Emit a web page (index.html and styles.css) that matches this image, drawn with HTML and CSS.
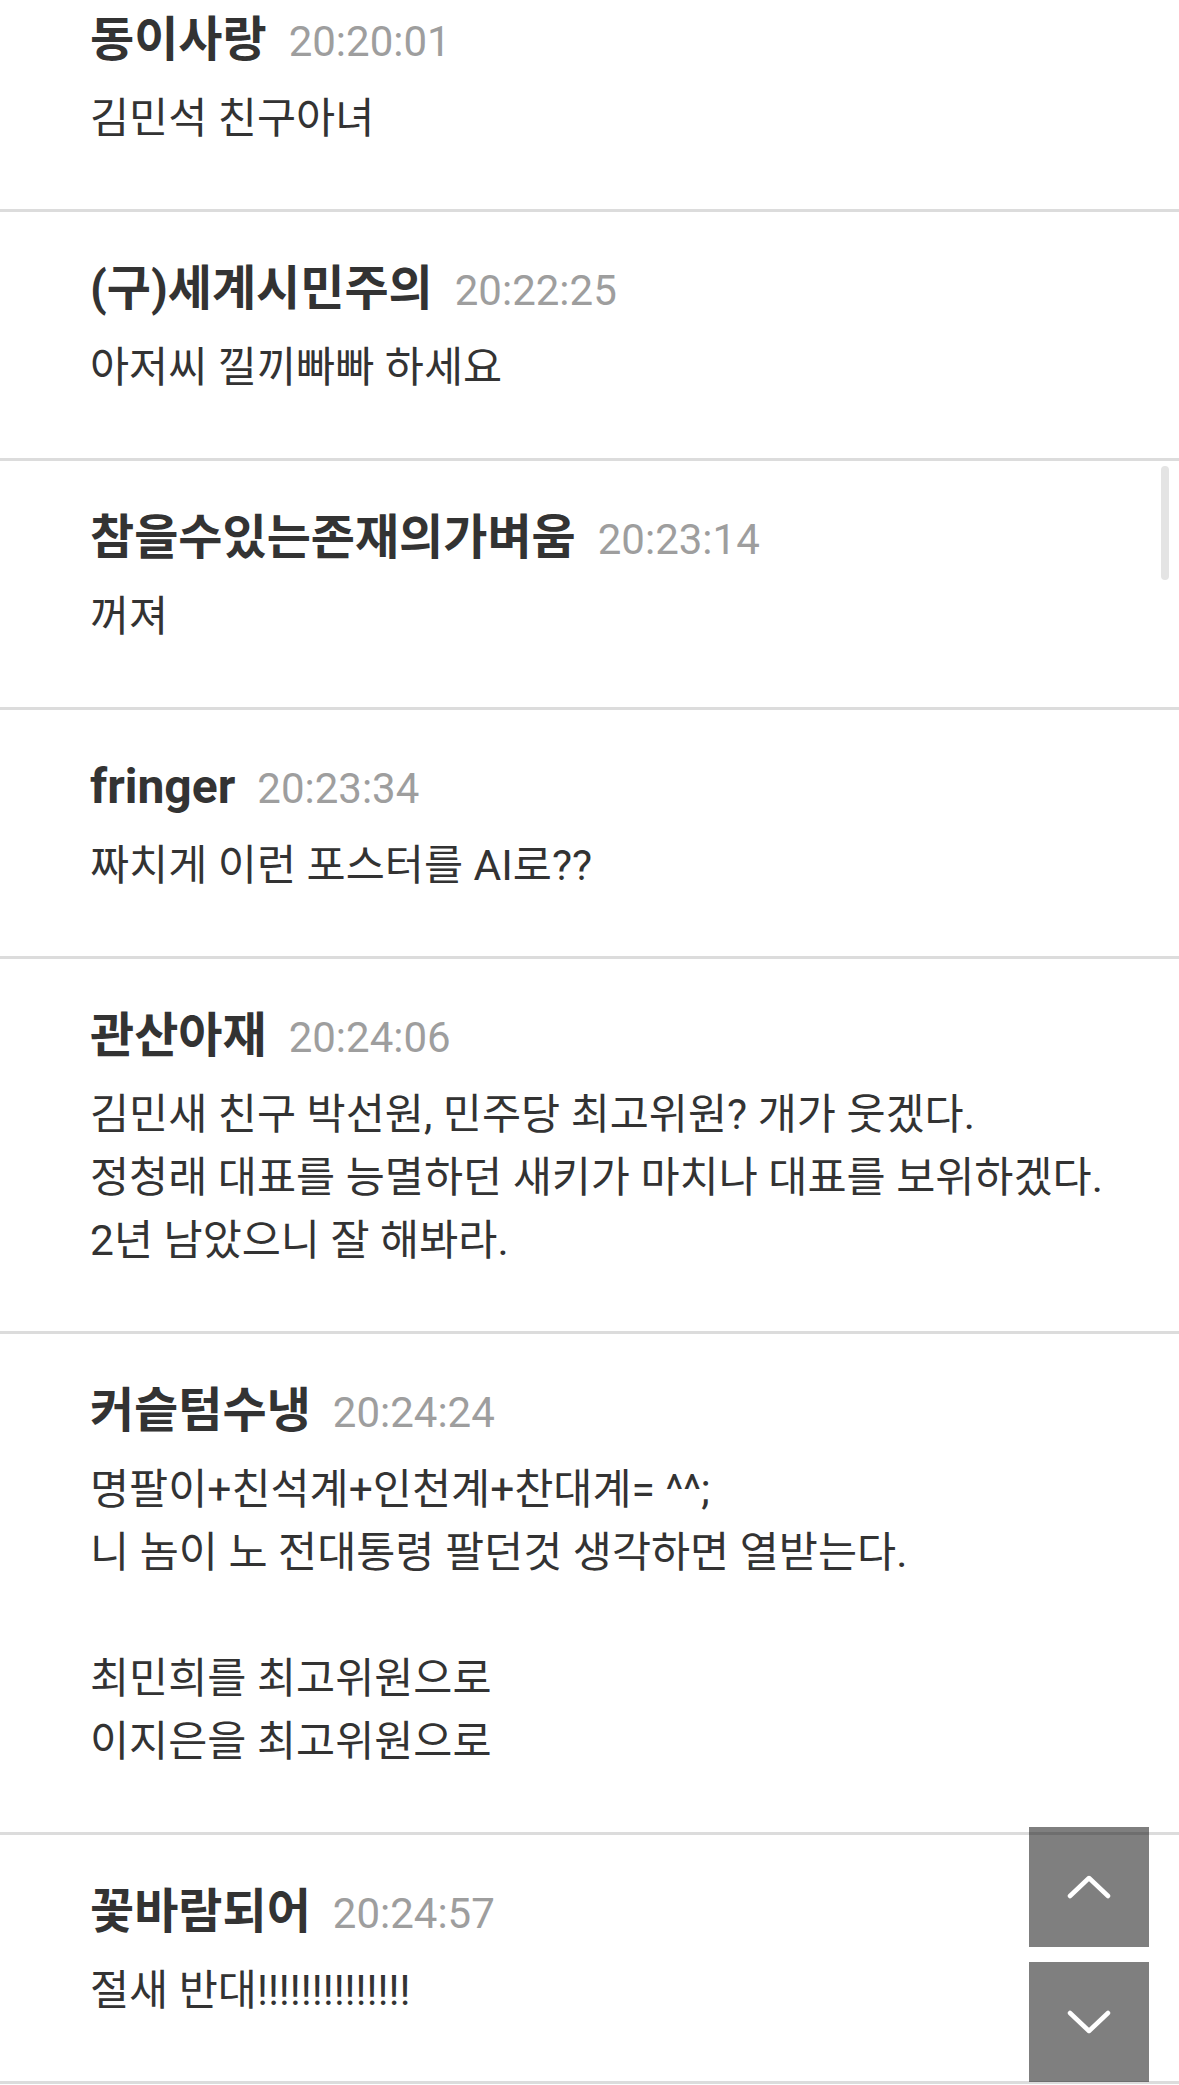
FILE: index.html
```html
<!DOCTYPE html>
<html lang="ko">
<head>
    <meta charset="UTF-8">
    <meta name="viewport" content="width=device-width, initial-scale=1.0">
    <title>댓글</title>
    <link rel="stylesheet" href="styles.css">
</head>
<body>

<ul class="comment-list">
    <li class="comment">
        <div class="comment-head"><span class="nick">동이사랑</span><span class="time">20:20:01</span></div>
        <p class="comment-body">김민석 친구아녀</p>
    </li>
    <li class="comment">
        <div class="comment-head"><span class="nick">(구)세계시민주의</span><span class="time">20:22:25</span></div>
        <p class="comment-body">아저씨 낄끼빠빠 하세요</p>
    </li>
    <li class="comment">
        <div class="comment-head"><span class="nick">참을수있는존재의가벼움</span><span class="time">20:23:14</span></div>
        <p class="comment-body">꺼져</p>
    </li>
    <li class="comment">
        <div class="comment-head"><span class="nick">fringer</span><span class="time">20:23:34</span></div>
        <p class="comment-body">짜치게 이런 포스터를 AI로??</p>
    </li>
    <li class="comment">
        <div class="comment-head"><span class="nick">관산아재</span><span class="time">20:24:06</span></div>
        <p class="comment-body">김민새 친구 박선원, 민주당 최고위원? 개가 웃겠다.<br>정청래 대표를 능멸하던 새키가 마치나 대표를 보위하겠다.<br>2년 남았으니 잘 해봐라.</p>
    </li>
    <li class="comment">
        <div class="comment-head"><span class="nick">커슽텀수냉</span><span class="time">20:24:24</span></div>
        <p class="comment-body">명팔이+친석계+인천계+찬대계= ^^;<br>니 놈이 노 전대통령 팔던것 생각하면 열받는다.<br><br>최민희를 최고위원으로<br>이지은을 최고위원으로</p>
    </li>
    <li class="comment">
        <div class="comment-head"><span class="nick">꽃바람되어</span><span class="time">20:24:57</span></div>
        <p class="comment-body">절새 반대!!!!!!!!!!!!!!</p>
    </li>
</ul>

<div class="scroll-thumb"></div>

<div class="scroll-buttons">
    <button class="scroll-btn" type="button" aria-label="위로">
        <svg width="44" height="24" viewBox="0 0 44 24"><path d="M3 21 L22 3 L41 21" fill="none" stroke="#fff" stroke-width="4.5" stroke-linecap="round" stroke-linejoin="round"/></svg>
    </button>
    <button class="scroll-btn" type="button" aria-label="아래로">
        <svg width="44" height="24" viewBox="0 0 44 24"><path d="M3 3 L22 21 L41 3" fill="none" stroke="#fff" stroke-width="4.5" stroke-linecap="round" stroke-linejoin="round"/></svg>
    </button>
</div>

</body>
</html>
```

FILE: styles.css
```css
* {
    box-sizing: border-box;
    margin: 0;
    padding: 0;
}

body {
    font-family: Roboto, "Noto Sans CJK KR", sans-serif;
    background: #fff;
    color: #333;
    overflow: hidden;
}

.comment-list {
    list-style: none;
    margin-top: -37px;
}

.comment {
    padding: 45px 30px 59px 90px;
    border-bottom: 3px solid #dcdcdc;
}

.comment-head {
    height: 63px;
    font-size: 48px;
    line-height: 63px;
    margin-bottom: 16px;
    white-space: nowrap;
}

.nick {
    font-weight: bold;
    color: #333;
}

.time {
    font-size: 42px;
    color: #9e9e9e;
    margin-left: 22px;
}

.comment-body {
    font-size: 42.5px;
    line-height: 63px;
    color: #333;
}

.scroll-thumb {
    position: fixed;
    top: 466px;
    right: 10px;
    width: 8px;
    height: 114px;
    border-radius: 4px;
    background: #e4e4e4;
}

.scroll-buttons {
    position: fixed;
    right: 30px;
    bottom: 3px;
    display: flex;
    flex-direction: column;
    gap: 15px;
}

.scroll-btn {
    width: 120px;
    height: 120px;
    border: none;
    background: rgba(0, 0, 0, 0.5);
    display: flex;
    justify-content: center;
    align-items: center;
    cursor: pointer;
}
```
